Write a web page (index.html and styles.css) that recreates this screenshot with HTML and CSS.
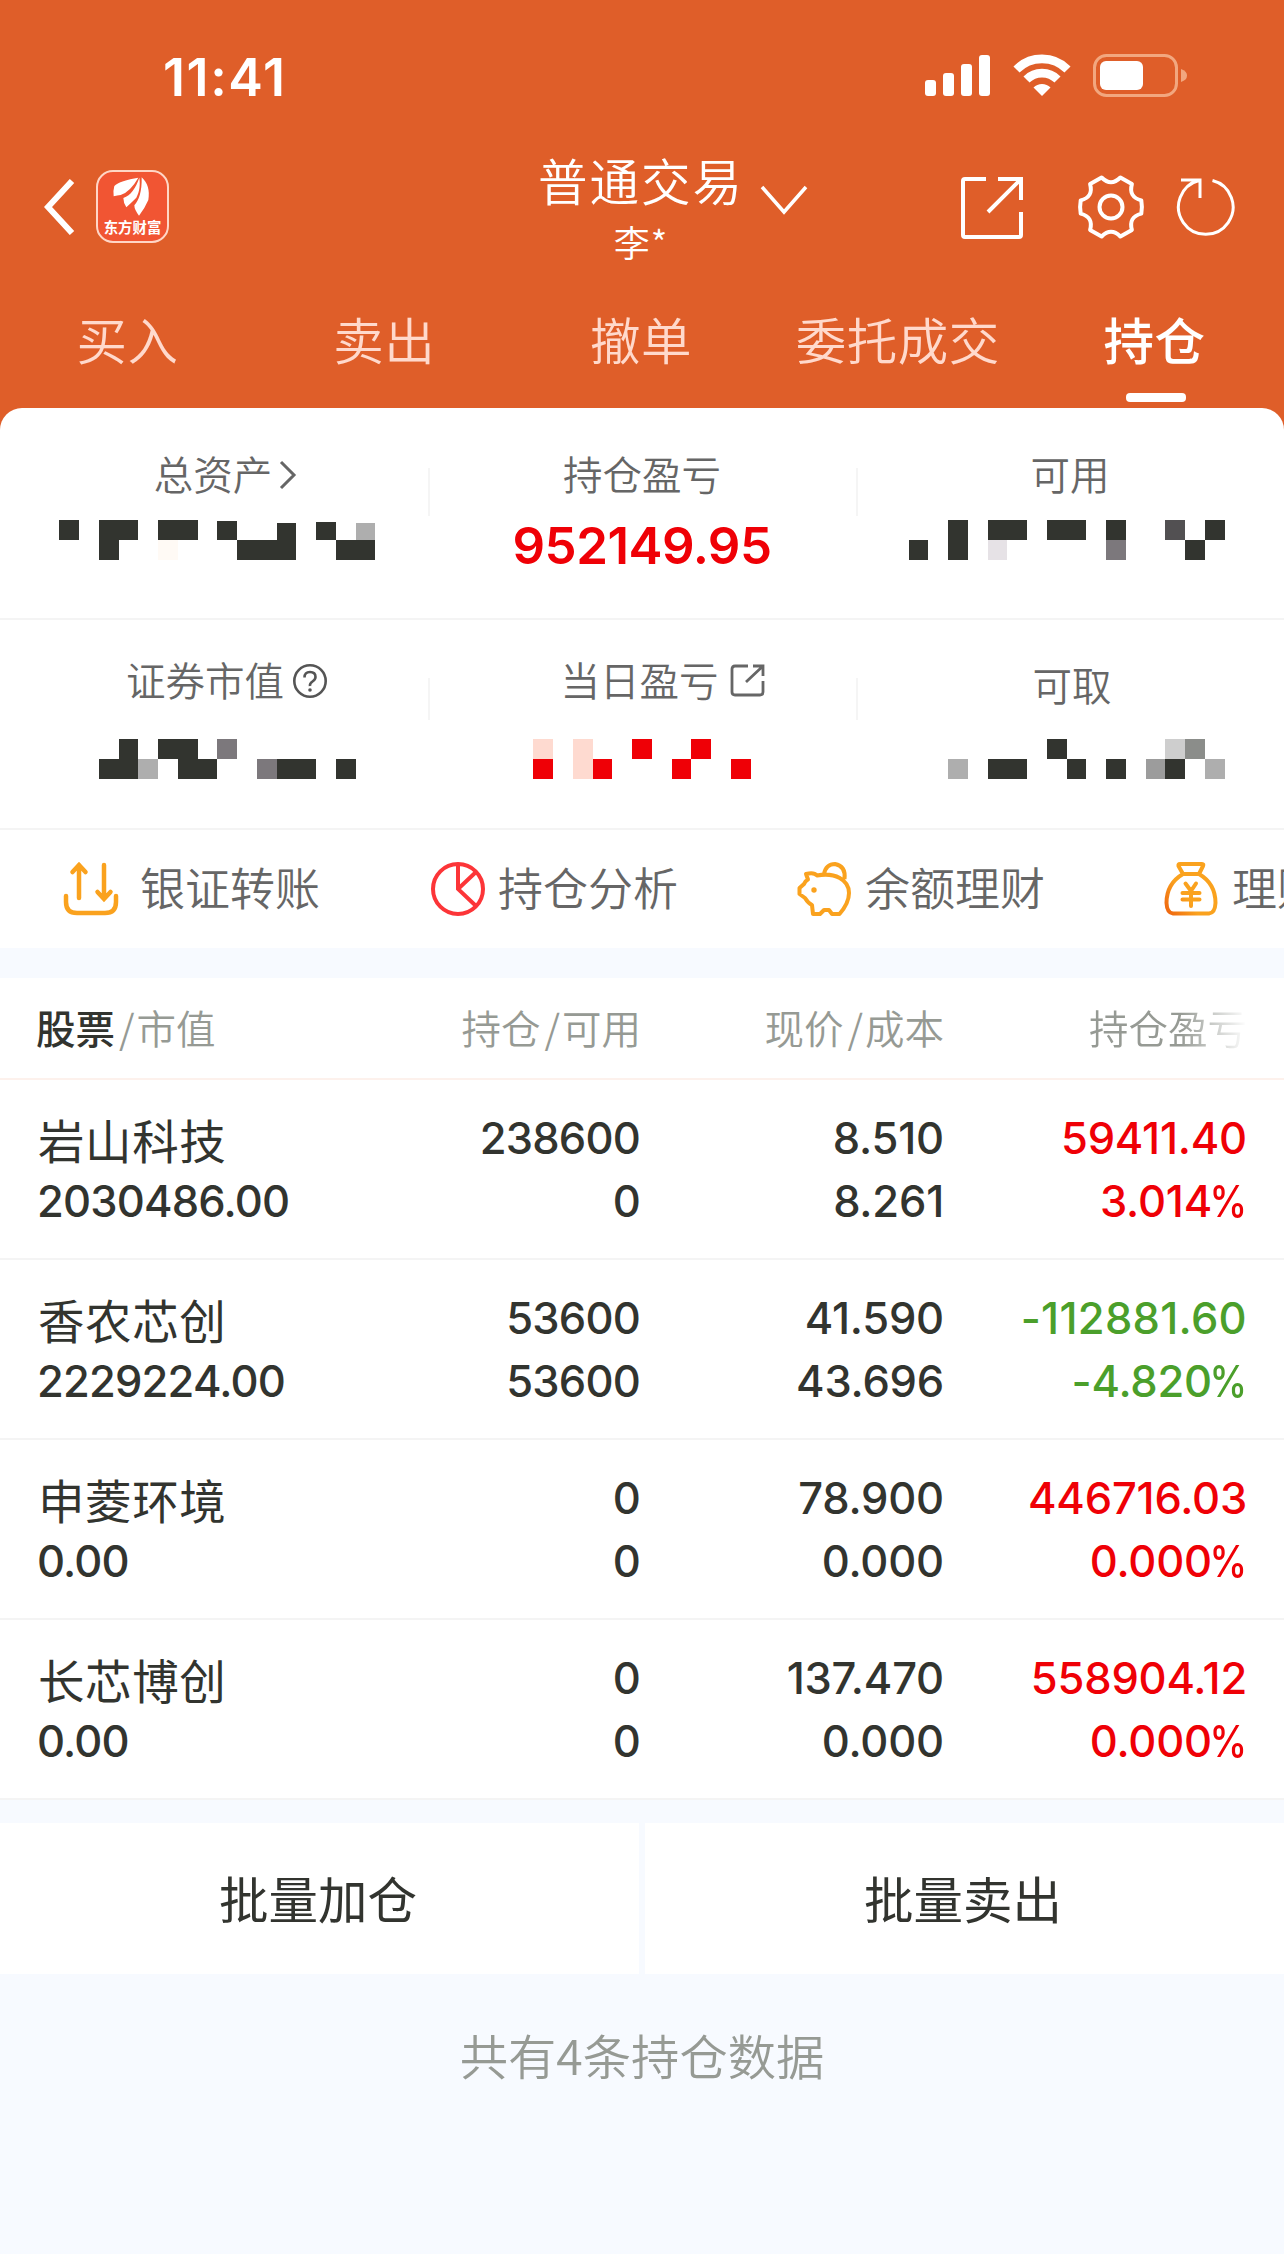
FILE: index.html
```html
<!DOCTYPE html>
<html lang="zh-CN">
<head>
<meta charset="utf-8">
<title>普通交易 - 持仓</title>
<link rel="stylesheet" href="styles.css">
</head>
<body>
<header class="top">
  <div class="status">
    <span class="time">11:41</span>
    <svg class="signal" width="66" height="42" viewBox="0 0 66 42" fill="#fff"><rect x="0" y="26" width="11" height="16" rx="3"/><rect x="18" y="19" width="11" height="23" rx="3"/><rect x="36" y="10" width="11" height="32" rx="3"/><rect x="54" y="1" width="11" height="41" rx="3"/></svg>
    <svg class="wifi" width="58" height="42" viewBox="0 0 58 42" fill="none" stroke="#fff" stroke-width="8.6"><path d="M3.5 15.500A36 36 0 0 1 54.500 15.500"/><path d="M13.500 25.500A22 22 0 0 1 44.500 25.500"/><path d="M20.500 33.500A12 12 0 0 1 37.500 33.500L29 42Z" fill="#fff" stroke="none"/></svg>
    <svg class="battery" width="96" height="44" viewBox="0 0 96 44"><rect x="1.500" y="1.500" width="82" height="40" rx="12" fill="none" stroke="#f2a77f" stroke-width="3"/><rect x="7" y="7" width="43" height="29" rx="6" fill="#fff"/><path d="M88 15Q94 17 94 21.500T88 28Z" fill="#f2a77f"/></svg>
  </div>
  <div class="nav">
    <svg class="back" width="32" height="56" viewBox="0 0 32 56" fill="none" stroke="#fff" stroke-width="6"><path d="M28 2L4 28L28 54"/></svg>
    <div class="logo">
      <svg width="46" height="40" viewBox="0 0 138 120" fill="#fff"><path d="M88 2C54 7 26 16 16 27Q12 40 14 58Q25 55 35 54Q64 44 88 2Z"/><path d="M91 2C80 34 66 54 43 63Q43 77 52 91Q68 76 82 62C92 43 94 22 91 2Z"/><path d="M98 1C99 44 90 70 76 85Q76 98 90 116Q107 95 118 69C123 40 116 18 98 1Z"/></svg>
      <span>东方财富</span>
    </div>
    <div class="account">
      <div class="account-type">普通交易</div>
      <div class="account-name">李*</div>
    </div>
    <svg class="expand" width="48" height="32" viewBox="0 0 48 32" fill="none" stroke="#fff" stroke-width="3.500"><path d="M2 3L24 28L46 3"/></svg>
    <svg class="export" width="64" height="64" viewBox="0 0 64 64" fill="none" stroke="#fff" stroke-width="4"><path d="M26 3H5Q3 3 3 5V59Q3 61 5 61H59Q61 61 61 59V36M38 3H61V24M61 3L28 36"/></svg>
    <svg class="gear" width="68" height="68" viewBox="-34 -34 68 68" fill="none" stroke="#fff" stroke-width="4" stroke-linejoin="round"><path d="M30.300 -6.600Q31.500 0 30.300 6.600Q17.300 10 20.900 22.900L9.400 29.500Q0 20 -9.400 29.500L-20.900 22.900Q-17.300 10 -30.300 6.600Q-31.500 0 -30.300 -6.600Q-17.300 -10 -20.900 -22.900L-9.400 -29.500Q0 -20 9.400 -29.500L20.900 -22.900Q17.300 -10 30.300 -6.600Z"/><circle r="11.500"/></svg>
    <svg class="refresh" width="62" height="62" viewBox="-31 -31 62 62" fill="none" stroke="#fff" stroke-width="3"><path d="M6.500 -26.500A27.300 27.300 0 1 1 -7 -26.500M-25 -27H-6V-9"/></svg>
  </div>
  <nav class="tabs">
    <span>买入</span><span>卖出</span><span>撤单</span><span>委托成交</span><span class="active">持仓</span>
  </nav>
</header>
<main>
  <section class="summary">
    <div class="cell"><div class="label with-arrow">总资产<svg width="18" height="30" viewBox="0 0 18 30" fill="none" stroke="#666" stroke-width="3"><path d="M2 2L15 15L2 28"/></svg></div>
      <svg class="mask" width="428" height="40" viewBox="0 0 428 40" fill="#32342f" shape-rendering="crispEdges"><path d="M59 0h20v20h-20zM99 0h39v20h-19v20h-20zM158 0h40v20h-40zM217 1h20v19h-20zM237 20h40v-17h19v37h-59zM316 2h20v18h-20zM336 20h39v20h-39z"/><path fill="#aeaeae" d="M356 3h19v17h-19z"/><path fill="#fffaf5" d="M158 20h20v20h-20z"/></svg></div>
    <div class="cell"><div class="label">持仓盈亏</div><div class="profit">952149.95</div></div>
    <div class="cell"><div class="label">可用</div>
      <svg class="mask" width="428" height="40" viewBox="856 0 428 40" fill="#32342f" shape-rendering="crispEdges"><path d="M909 20h19v20h-19zM948 0h20v40h-20zM988 0h39v20h-39zM1047 0h39v20h-39zM1106 0h20v20h-20zM1205 0h20v20h-20zM1185 20h20v20h-20z"/><path fill="#7c787c" d="M1106 20h20v20h-20z"/><path fill="#525052" d="M1165 0h20v20h-20z"/><path fill="#e6e2e6" d="M988 20h19v20h-19z"/></svg></div>
  </section>
  <section class="summary second">
    <div class="cell"><div class="label with-help">证券市值<svg width="36" height="36" viewBox="0 0 36 36" fill="none" stroke="#555" stroke-width="2.600"><circle cx="18" cy="18" r="15.700"/><path d="M12.500 14.500Q12.500 9 18 9T23.500 14Q23.500 16.500 20.500 18.500T18 23"/><circle cx="18" cy="27" r="1.800" fill="#555" stroke="none"/></svg></div>
      <svg class="mask" width="428" height="40" viewBox="0 0 428 40" fill="#32342f" shape-rendering="crispEdges"><path d="M119 0h19v40h-39v-20h20zM158 0h40v20h19v20h-39v-20h-20zM277 20h39v20h-39zM336 20h20v20h-20z"/><path fill="#7c787c" d="M217 0h20v20h-20zM257 20h20v20h-20z"/><path fill="#aeaeae" d="M138 20h20v20h-20z"/></svg></div>
    <div class="cell"><div class="label with-link">当日盈亏<svg width="36" height="36" viewBox="0 0 36 36" fill="none" stroke="#666" stroke-width="2.800"><path d="M19 3H6Q3 3 3 6V29Q3 32 6 32H31Q34 32 34 29V18M24 3H34V13M34 3L17 19"/></svg></div>
      <svg class="mask" width="428" height="40" viewBox="428 0 428 40" fill="#ef0006" shape-rendering="crispEdges"><path d="M533 20h20v20h-20zM593 20h19v20h-19zM632 0h20v20h-20zM672 20h19v20h-19zM691 0h20v20h-20zM731 20h20v20h-20z"/><path fill="#fedad0" d="M533 0h20v20h-20zM573 0h20v40h-20z"/></svg></div>
    <div class="cell"><div class="label low">可取</div>
      <svg class="mask" width="428" height="40" viewBox="856 0 428 40" fill="#32342f" shape-rendering="crispEdges"><path d="M988 20h39v20h-39zM1047 0h20v20h-20zM1067 20h19v20h-19zM1106 20h20v20h-20zM1165 20h20v20h-20z"/><path fill="#aeaeae" d="M948 20h20v20h-20zM1205 20h20v20h-20z"/><path fill="#9c9c9c" d="M1146 20h19v20h-19z"/><path fill="#cecece" d="M1165 0h20v20h-20z"/><path fill="#8b8d8a" d="M1185 0h20v20h-20z"/></svg></div>
  </section>
  <section class="actions">
    <div class="action transfer"><svg width="56" height="56" viewBox="0 0 56 56" fill="none" stroke="#faa21e" stroke-width="4.500" stroke-linecap="round"><path d="M3 35V41Q3 52 14 52H42Q53 52 53 41V35M16 37V4M9.500 11L16 4L22.500 11M41 4V37M34.500 31L41 38L47.500 31"/></svg>银证转账</div>
    <div class="action"><svg width="56" height="56" viewBox="0 0 56 56" fill="none" stroke="#fc3538" stroke-width="4"><circle cx="28" cy="28" r="25"/><path d="M28 3V28L46 45M28 28L46 11"/></svg>持仓分析</div>
    <div class="action"><svg width="56" height="56" viewBox="0 0 56 56" fill="none" stroke="#faa21e" stroke-width="4" stroke-linejoin="round"><path d="M9 13Q17 11 20 14.500C38 11 52 19 52 32Q52 42 42.500 53H35L32 49H27L23 53H16L15 44Q11 42 8 37L2.500 33V27L7 23Q8 20 11 18.500ZM27 13Q29 3 38 3Q49 5 47.500 18"/><circle cx="17" cy="29" r="2.700" fill="#faa21e" stroke="none"/></svg>余额理财</div>
    <div class="action"><svg width="56" height="56" viewBox="0 0 56 56" fill="none" stroke="url(#bag)" stroke-width="4" stroke-linejoin="round" stroke-linecap="round"><defs><linearGradient id="bag" gradientUnits="userSpaceOnUse" x1="2" y1="50" x2="22" y2="36"><stop stop-color="#ef6710"/><stop offset="1" stop-color="#faa21e"/></linearGradient></defs><path d="M16 3H38Q40 3 39 5L35 13H19L14.500 5Q14 3 16 3ZM19 13C7 20 2.500 31 2.500 42Q3 52 9 52.500H45Q51 52 51.500 42C51.500 31 47 20 35 13M21.500 22.500L27 30L32 22.500M27 31V45M18.500 32H35.500M18.500 38.500H35.500"/></svg>理财</div>
  </section>
  <section class="table">
    <div class="thead"><span><b>股票</b><i>/</i>市值</span><span>持仓<i>/</i>可用</span><span>现价<i>/</i>成本</span><span class="fade">持仓盈亏</span></div>
    <div class="row"><div><p class="name">岩山科技</p><p>2030486.00</p></div><div><p>238600</p><p>0</p></div><div><p>8.510</p><p>8.261</p></div><div class="up"><p>59411.40</p><p>3.014<em>%</em></p></div></div>
    <div class="row"><div><p class="name">香农芯创</p><p>2229224.00</p></div><div><p>53600</p><p>53600</p></div><div><p>41.590</p><p>43.696</p></div><div class="down"><p class="wide">-112881.60</p><p>-4.820<em>%</em></p></div></div>
    <div class="row"><div><p class="name">申菱环境</p><p>0.00</p></div><div><p>0</p><p>0</p></div><div><p>78.900</p><p>0.000</p></div><div class="up"><p>446716.03</p><p>0.000<em>%</em></p></div></div>
    <div class="row"><div><p class="name">长芯博创</p><p>0.00</p></div><div><p>0</p><p>0</p></div><div><p>137.470</p><p>0.000</p></div><div class="up"><p>558904.12</p><p>0.000<em>%</em></p></div></div>
  </section>
  <section class="batch"><span>批量加仓</span><span>批量卖出</span></section>
  <p class="total">共有4条持仓数据</p>
</main>
</body>
</html>
```
FILE: styles.css
```css
* { box-sizing: border-box; margin: 0; padding: 0; }
body {
  width: 1284px;
  height: 2254px;
  overflow: hidden;
  background: #f7faff;
  color: #32342f;
  font-family: "Noto Sans CJK SC", sans-serif;
  font-weight: 350;
  white-space: nowrap;
}
svg { display: block; flex: none; }
i { font-style: normal; }

.top { height: 430px; background: #df5e29; color: #fff; }
.status { display: flex; align-items: flex-start; height: 150px; padding: 54px 0 0 163px; }
.time { width: 762px; font: 600 52px/47px Inter, sans-serif; letter-spacing: 1.6px; }
.wifi { margin-left: 22px; }
.battery { margin-left: 22px; }

.nav { display: flex; height: 146px; padding-left: 44px; }
.back { margin-top: 29px; }
.logo {
  display: flex; flex-direction: column; align-items: center;
  width: 73px; height: 73px; margin: 20px 0 0 20px; padding-top: 5px;
  border: 2px solid #ffd6c6; border-radius: 17px; background: #f15533;
}
.logo svg { margin-left: -2px; }
.logo span { font-size: 14.400px; font-weight: 700; line-height: 20px; }
.account { width: 206px; margin-left: 369px; text-align: center; }
.account-type { font-size: 49.500px; line-height: 60px; letter-spacing: 2px; font-weight: 350; }
.account-name { font-size: 36px; line-height: 62px; font-weight: 350; letter-spacing: 1px; }
.expand { margin: 34px 0 0 16px; }
.export { margin: 26px 0 0 152px; }
.gear { margin: 23px 0 0 53px; }
.refresh { margin: 26px 0 0 30px; }

.tabs { display: grid; grid-template-columns: repeat(5, 1fr); height: 112px; text-align: center; font-size: 50.500px; line-height: 84px; color: #ffd9cc; }
.tabs span { margin-left: -1px; margin-right: 1px; letter-spacing: 0.500px; }
.tabs .active { position: relative; color: #fff; font-weight: 500; }
.active::after { content: ""; position: absolute; left: 100px; top: 97px; width: 60px; height: 9px; border-radius: 4px; background: #fff; }

main { position: relative; margin-top: -22px; }
.summary { display: grid; grid-template-columns: repeat(3, 1fr); height: 212px; background: #fff; border-bottom: 2px solid #f4f4f4; border-radius: 22px 22px 0 0; padding-top: 38px; }
.summary.second { height: 210px; border-radius: 0; padding-top: 32px; }
.cell { position: relative; display: flex; flex-direction: column; align-items: center; }
.cell + .cell::before { content: ""; position: absolute; left: 0; top: 22px; width: 2px; height: 48px; background: #f5f5f5; }
.second .cell + .cell::before { top: 26px; height: 42px; }
.label { display: flex; align-items: center; height: 54px; font-size: 39.500px; line-height: 54px; color: #666; }
.label svg { margin: 3px 0 0 7px; }
.with-arrow { margin-left: 23px; }
.with-help { margin-left: 26px; }
.label.with-help svg { margin-left: 8px; }
.with-link { margin-left: 41px; }
.label.with-link svg { margin-left: 10px; }
.mask { margin-top: 20px; }
.second .mask { margin-top: 33px; }
.low { position: relative; top: 5px; left: 2px; }
.profit { margin-top: 17px; font: 600 51px/58px Inter, sans-serif; letter-spacing: -0.500px; color: #ef0006; }

.actions { display: flex; height: 118px; padding-left: 63px; background: #fff; overflow: hidden; font-size: 45px; color: #666; }
.action { display: flex; flex: none; width: 367px; height: 118px; line-height: 113px; }
.action svg { margin: 31px 12px 0 0; }
.transfer svg { margin-right: 21px; }

.table { margin-top: 30px; background: #fff; }
.thead, .row { display: grid; grid-template-columns: 337px 304px 303px 303px; text-align: right; }
.thead { height: 102px; border-bottom: 2px solid #fdf1ec; line-height: 97px; font-size: 39.500px; color: #969a94; }
.thead b { font-weight: 500; color: #32342f; }
.thead i { margin: 0 2px 0 4px; }
.thead span:first-child { padding-left: 36px; text-align: left; }
.row > div:first-child { padding-left: 37px; text-align: left; }
.fade { -webkit-mask-image: linear-gradient(90deg, #000 78%, transparent 100%); mask-image: linear-gradient(90deg, #000 78%, transparent 100%); }
.row { height: 180px; padding-top: 27px; border-bottom: 2px solid #f4f4f4; font: 550 43.500px/63px Inter, sans-serif; letter-spacing: -0.800px; }
.row > div:nth-child(2) { padding-right: 1px; }
.row > div:nth-child(n + 3) { letter-spacing: -0.200px; }
.row p { height: 63px; }
.row .name { padding-left: 1px; font-family: "Noto Sans CJK SC", sans-serif; font-weight: 400; font-size: 46.500px; letter-spacing: 0.600px; }
.row em { display: inline-block; margin-left: -8px; font-style: normal; transform: scaleX(0.87); transform-origin: right; }
.row .wide { letter-spacing: 0.300px; }
.up { color: #ef0006; }
.down { color: #4b9f2b; }

.batch { display: grid; grid-template-columns: 1fr 1fr; gap: 6px; height: 151px; margin-top: 23px; text-align: center; font-size: 49.500px; font-weight: 400; line-height: 149px; }
.batch span { padding-right: 3px; background: #fff; }
.total { margin-top: 37px; text-align: center; font-size: 48.300px; line-height: 87px; color: #969a94; }
```
